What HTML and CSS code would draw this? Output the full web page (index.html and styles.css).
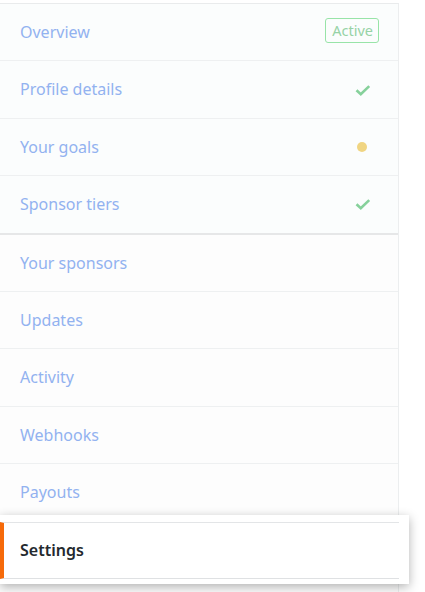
FILE: index.html
```html
<!DOCTYPE html>
<html>
<head>
<meta charset="utf-8">
<link rel="stylesheet" href="styles.css">
</head>
<body>
<nav class="menu">
  <div class="group group-top">
    <a class="item">Overview <span class="badge">Active</span></a>
    <a class="item">Profile details
      <svg class="check" width="16" height="16" viewBox="0 0 16 16"><path d="M1.5 8.2l4.3 4.1 8.4-8.2" fill="none" stroke="currentColor" stroke-width="2.6"/></svg>
    </a>
    <a class="item">Your goals <span class="dot"></span></a>
    <a class="item item-last">Sponsor tiers
      <svg class="check" width="16" height="16" viewBox="0 0 16 16"><path d="M1.5 8.2l4.3 4.1 8.4-8.2" fill="none" stroke="currentColor" stroke-width="2.6"/></svg>
    </a>
  </div>
  <div class="group group-bottom">
    <a class="item">Your sponsors</a>
    <a class="item">Updates</a>
    <a class="item">Activity</a>
    <a class="item">Webhooks</a>
    <a class="item">Payouts</a>
  </div>
  <div class="drag">
    <a class="item selected">Settings</a>
  </div>
</nav>
</body>
</html>
```
FILE: styles.css
```css
html, body {
  margin: 0;
  padding: 0;
  background: #ffffff;
}
body {
  font-family: "Noto Sans", "Open Sans", sans-serif;
  font-size: 16px;
}
.menu {
  width: 399px;
  margin-top: 3px;
  border-top: 1px solid #e9ebec;
  border-right: 1px solid #eceeef;
  min-height: 589px;
  box-sizing: border-box;
  background: #fdfdfd;
}
.group-top {
  background: #fbfdfd;
  border-bottom: 2px solid #e6e7e8;
}
.item {
  display: flex;
  align-items: center;
  justify-content: space-between;
  padding: 16px 20px;
  line-height: 24.4px;
  color: #92b2f0;
  border-bottom: 1px solid #eef0f1;
  text-decoration: none;
}
.item-last {
  border-bottom: none;
}
.badge {
  font-size: 14.5px;
  line-height: 23px;
  padding: 0 5px 0 6px;
  border: 1px solid #98e4a8;
  border-radius: 3px;
  color: #96d3a6;
  margin-top: -3px;
  margin-right: -1px;
}
.check {
  color: #86d19b;
  margin-right: 7px;
}
.dot {
  width: 10px;
  height: 10px;
  border-radius: 50%;
  background: #f0d582;
  margin-right: 11px;
}
.drag {
  position: relative;
  width: 409px;
  margin-top: -7px;
  padding: 7px 0 5px;
  background: #ffffff;
  box-shadow: 0 3px 10px rgba(0, 0, 0, 0.3);
}
.drag .item {
  width: 399px;
  box-sizing: border-box;
  border-top: 1px solid #e3e5e7;
  border-bottom: 1px solid #dfe1e3;
  border-left: 4px solid #f66a0a;
  padding-left: 16px;
  padding-top: 15px;
  color: #24292e;
  font-weight: 600;
}
```
